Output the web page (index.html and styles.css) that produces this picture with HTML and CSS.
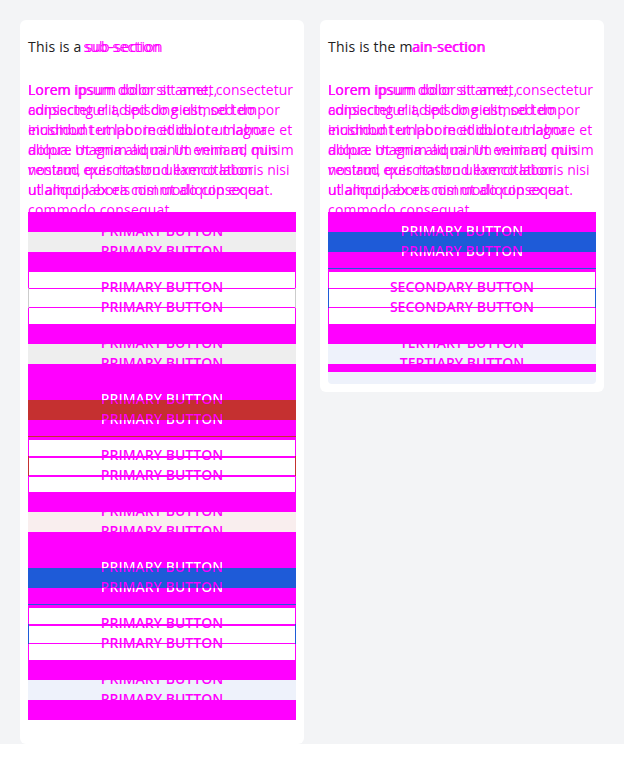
FILE: index.html
```html
<!DOCTYPE html>
<html lang="en">
<head>
<meta charset="utf-8">
<title>Sections</title>
<link rel="stylesheet" href="styles.css">
</head>
<body>
<main class="page">
  <section class="card card-sub">
    <h2 class="title">This is a <span class="drift drift-far">sub-section</span></h2>
    <div class="copy">
      <p class="para para-wide">Lorem ipsum dolor sit amet, consectetur adipiscing elit, sed do eiusmod tempor incididunt ut labore et dolore magna aliqua. Ut enim ad minim veniam, quis nostrud exercitation ullamco laboris nisi ut aliquip ex ea commodo consequat.</p>
      <p class="para para-narrow">Lorem ipsum dolor sit amet, consectetur adipiscing elit, sed do eiusmod tempor incididunt ut labore et dolore magna aliqua. Ut enim ad minim veniam, quis nostrud exercitation ullamco laboris nisi ut aliquip ex ea commodo consequat.</p>
    </div>
    <div class="slots">
      <div class="slot filled neutral"><span class="lbl lbl-a">Primary button</span><span class="lbl lbl-b">Primary button</span></div>
      <div class="slot outline neutral"><span class="lbl lbl-a">Primary button</span><span class="lbl lbl-b">Primary button</span></div>
      <div class="slot tertiary neutral"><span class="lbl lbl-a">Primary button</span><span class="lbl lbl-b">Primary button</span></div>
      <div class="slot filled danger on-dark"><span class="lbl lbl-a">Primary button</span><span class="lbl lbl-b">Primary button</span></div>
      <div class="slot outline danger"><span class="lbl lbl-a">Primary button</span><span class="lbl lbl-b">Primary button</span></div>
      <div class="slot tertiary danger"><span class="lbl lbl-a">Primary button</span><span class="lbl lbl-b">Primary button</span></div>
      <div class="slot filled primary on-dark"><span class="lbl lbl-a">Primary button</span><span class="lbl lbl-b">Primary button</span></div>
      <div class="slot outline primary"><span class="lbl lbl-a">Primary button</span><span class="lbl lbl-b">Primary button</span></div>
      <div class="slot tertiary primary"><span class="lbl lbl-a">Primary button</span><span class="lbl lbl-b">Primary button</span></div>
      <div class="tail"></div>
    </div>
  </section>

  <section class="card card-main">
    <h2 class="title">This is the m<span class="drift">ain-section</span></h2>
    <div class="copy">
      <p class="para para-wide">Lorem ipsum dolor sit amet, consectetur adipiscing elit, sed do eiusmod tempor incididunt ut labore et dolore magna aliqua. Ut enim ad minim veniam, quis nostrud exercitation ullamco laboris nisi ut aliquip ex ea commodo consequat.</p>
      <p class="para para-narrow">Lorem ipsum dolor sit amet, consectetur adipiscing elit, sed do eiusmod tempor incididunt ut labore et dolore magna aliqua. Ut enim ad minim veniam, quis nostrud exercitation ullamco laboris nisi ut aliquip ex ea commodo consequat.</p>
    </div>
    <div class="slots">
      <div class="slot filled primary on-dark"><span class="lbl lbl-a">Primary button</span><span class="lbl lbl-b">Primary button</span></div>
      <div class="slot outline primary"><span class="lbl lbl-a">Secondary button</span><span class="lbl lbl-b">Secondary button</span></div>
      <div class="slot tertiary primary slot-end"><span class="lbl lbl-a">Tertiary button</span><span class="lbl lbl-b">Tertiary button</span></div>
      <div class="tail tail-soft primary"></div>
    </div>
  </section>
</main>
</body>
</html>
```

FILE: styles.css
```css
* {
  box-sizing: border-box;
}

html,
body {
  margin: 0;
  background: #ffffff;
}

body {
  font-family: "Open Sans", "Noto Sans", sans-serif;
  font-size: 14px;
  line-height: 20px;
  color: #212121;
}

.page {
  display: flex;
  align-items: flex-start;
  gap: 16px;
  height: 744px;
  padding: 20px 20px 0;
  background: #f3f4f6;
}

.card {
  flex: 1 1 0;
  min-width: 0;
  background: #ffffff;
  border-radius: 6px;
  padding: 17px 8px 8px;
}

.card-sub {
  padding-bottom: 24px;
}

.title {
  margin: 0 0 23px;
  font-size: 14px;
  font-weight: 400;
  line-height: 20px;
  letter-spacing: 0.2px;
  white-space: nowrap;
}

.drift {
  color: #ff00ff;
  text-shadow: -1px 0 0 #ff00ff;
}

.drift-far {
  text-shadow: -2px 0 0 #ff00ff;
}

.copy {
  display: grid;
  margin-bottom: 12px;
  color: #ff00ff;
}

.para {
  grid-area: 1 / 1;
  margin: 0;
}

.para-wide {
  letter-spacing: 0.2px;
  margin-bottom: -20px;
}

/* colour sets */
.neutral {
  --fill: #eeeeee;
  --line: #cccccc;
  --edge: #ff00ff;
  --soft: #eeeeee;
}

.danger {
  --fill: #c53030;
  --line: #c53030;
  --edge: #c53030;
  --soft: #f9eeee;
}

.primary {
  --fill: #1e5bd8;
  --line: #1e5bd8;
  --edge: #1e5bd8;
  --soft: #eef2fb;
}

.slot {
  display: flex;
  flex-direction: column;
  align-items: center;
  height: 56px;
  padding-top: 9px;
  font-weight: 600;
  text-transform: uppercase;
  color: #ff00ff;
}

.lbl {
  display: block;
  height: 20px;
  line-height: 20px;
  white-space: nowrap;
}

.filled {
  background: linear-gradient(to bottom, #ff00ff 0 20px, var(--fill) 20px 40px, #ff00ff 40px);
}

.tertiary {
  background: linear-gradient(to bottom, #ff00ff 0 20px, var(--soft) 20px 40px, #ff00ff 40px);
}

.slot-end {
  background: linear-gradient(to bottom, #ff00ff 0 20px, var(--soft) 20px 40px, #ff00ff 40px 48px, var(--soft) 48px);
}

.outline {
  background:
    linear-gradient(var(--line), var(--line)) left 0 top 20px / 1px 20px no-repeat,
    linear-gradient(var(--line), var(--line)) right 0 top 20px / 1px 20px no-repeat,
    linear-gradient(#ff00ff, #ff00ff) left 0 top 4px / 1px 52px no-repeat,
    linear-gradient(#ff00ff, #ff00ff) right 0 top 4px / 1px 52px no-repeat,
    linear-gradient(to bottom,
      var(--edge) 0 1px,
      #ff00ff 1px 4px,
      #ffffff 4px 20px,
      #ff00ff 20px 21.5px,
      #ffffff 21.5px 39px,
      #ff00ff 39px 40.5px,
      #ffffff 40.5px);
}

.on-dark .lbl-a {
  background: linear-gradient(to bottom, #ffffff 0 11px, #ff00ff 11px);
  -webkit-background-clip: text;
  background-clip: text;
  color: transparent;
}

.on-dark .lbl-b {
  background: linear-gradient(to bottom, #ff00ff 0 11px, #ffffff 11px);
  -webkit-background-clip: text;
  background-clip: text;
  color: transparent;
}

.tail {
  height: 4px;
  background: #ff00ff;
}

.tail-soft {
  background: var(--soft);
  border-radius: 0 0 4px 4px;
}
```
